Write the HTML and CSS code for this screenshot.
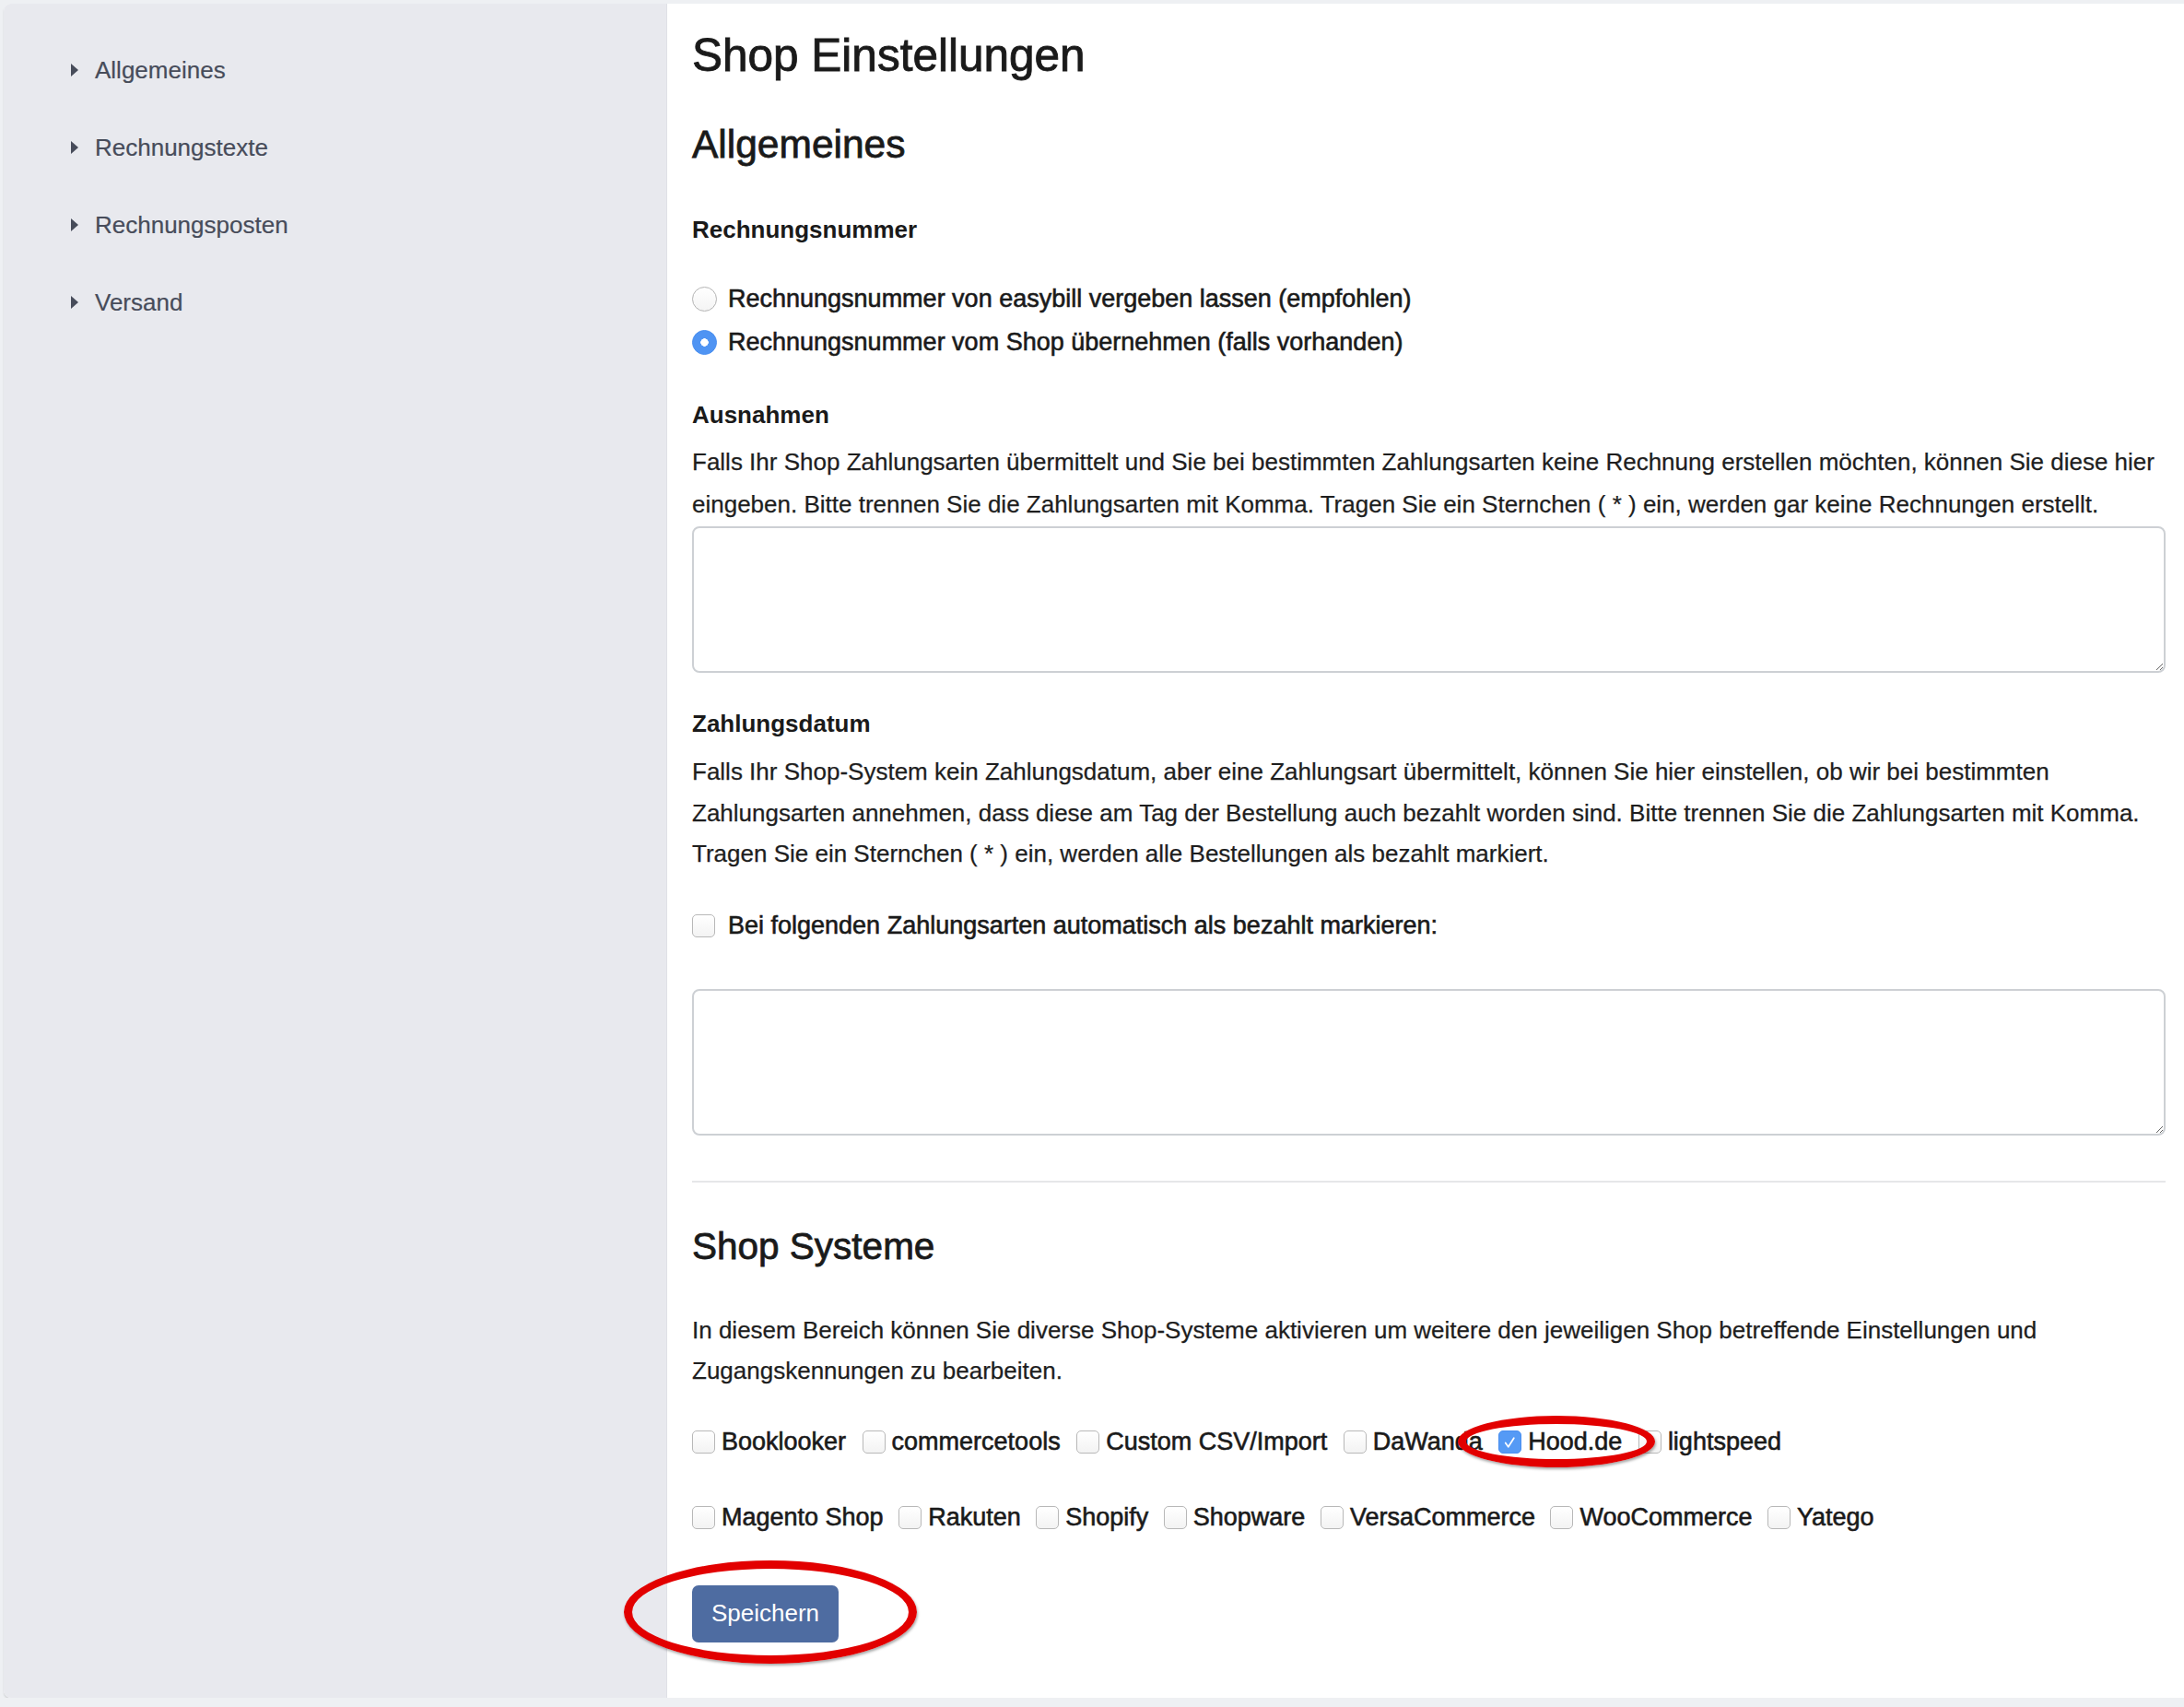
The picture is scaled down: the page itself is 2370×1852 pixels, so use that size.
FILE: index.html
```html
<!DOCTYPE html>
<html lang="de">
<head>
    <meta charset="UTF-8">
    <title>Shop Einstellungen</title>
    <link rel="stylesheet" href="styles.css">
</head>
<body>
    <div class="card">
        <aside class="sidebar">
            <ul class="nav">
                <li><span class="caret"></span>Allgemeines</li>
                <li><span class="caret"></span>Rechnungstexte</li>
                <li><span class="caret"></span>Rechnungsposten</li>
                <li><span class="caret"></span>Versand</li>
            </ul>
        </aside>

        <main class="content">
            <h1>Shop Einstellungen</h1>
            <h2>Allgemeines</h2>

            <div class="field-label number-label">Rechnungsnummer</div>
            <div class="radios">
                <label class="radio"><span class="dot"></span>Rechnungsnummer von easybill vergeben lassen (empfohlen)</label>
                <label class="radio"><span class="dot checked"></span>Rechnungsnummer vom Shop übernehmen (falls vorhanden)</label>
            </div>

            <div class="field-label section-label">Ausnahmen</div>
            <p class="help help-exceptions">Falls Ihr Shop Zahlungsarten übermittelt und Sie bei bestimmten Zahlungsarten keine Rechnung erstellen möchten, können Sie diese hier<br>eingeben. Bitte trennen Sie die Zahlungsarten mit Komma. Tragen Sie ein Sternchen ( * ) ein, werden gar keine Rechnungen erstellt.</p>
            <textarea class="input-area area-exceptions"></textarea>

            <div class="field-label section-label">Zahlungsdatum</div>
            <p class="help help-payment">Falls Ihr Shop-System kein Zahlungsdatum, aber eine Zahlungsart übermittelt, können Sie hier einstellen, ob wir bei bestimmten<br>Zahlungsarten annehmen, dass diese am Tag der Bestellung auch bezahlt worden sind. Bitte trennen Sie die Zahlungsarten mit Komma.<br>Tragen Sie ein Sternchen ( * ) ein, werden alle Bestellungen als bezahlt markiert.</p>

            <label class="check auto-paid"><span class="box"></span>Bei folgenden Zahlungsarten automatisch als bezahlt markieren:</label>
            <textarea class="input-area area-paid"></textarea>

            <hr class="divider">

            <h2 class="systems-title">Shop Systeme</h2>
            <p class="help help-systems">In diesem Bereich können Sie diverse Shop-Systeme aktivieren um weitere den jeweiligen Shop betreffende Einstellungen und<br>Zugangskennungen zu bearbeiten.</p>

            <div class="systems-row first-row">
                <label class="system"><span class="box"></span>Booklooker</label>
                <label class="system"><span class="box"></span>commercetools</label>
                <label class="system"><span class="box"></span>Custom CSV/Import</label>
                <label class="system"><span class="box"></span>DaWanda</label>
                <label class="system"><span class="box checked"><svg viewBox="0 0 24 24" width="24" height="24"><path d="M7 12.5l3.2 4.5 6.3-10" fill="none" stroke="#fff" stroke-width="1.8" stroke-linecap="round" stroke-linejoin="round"/></svg></span>Hood.de</label>
                <label class="system"><span class="box"></span>lightspeed</label>
            </div>
            <div class="systems-row second-row">
                <label class="system"><span class="box"></span>Magento Shop</label>
                <label class="system"><span class="box"></span>Rakuten</label>
                <label class="system"><span class="box"></span>Shopify</label>
                <label class="system"><span class="box"></span>Shopware</label>
                <label class="system"><span class="box"></span>VersaCommerce</label>
                <label class="system"><span class="box"></span>WooCommerce</label>
                <label class="system"><span class="box"></span>Yatego</label>
            </div>

            <button type="submit" class="btn-save">Speichern</button>
        </main>

        <!-- Markierungen aus dem Screenshot -->
        <div class="mark mark-hood"></div>
        <div class="mark mark-save"></div>
    </div>
</body>
</html>
```

FILE: styles.css
```css
body {
    margin: 0;
    background: #eef0f3;
    font-family: "Liberation Sans", Arial, sans-serif;
    color: #1e1e1e;
}
.card {
    position: relative;
    display: flex;
    margin: 4px 0 0 4px;
    height: 1838px;
    background: #fff;
    border-radius: 8px 0 0 8px;
    box-shadow: 0 2px 2px rgba(0, 0, 0, 0.13);
    overflow: hidden;
}

/* Seitenleiste */
.sidebar {
    width: 719px;
    flex-shrink: 0;
    background: #e8e9ee;
    border-right: 1px solid #dfe1e6;
}
.nav {
    list-style: none;
    margin: 0;
    padding: 30px 0 0 73px;
}
.nav li {
    display: flex;
    align-items: center;
    height: 84px;
    font-size: 26px;
    color: #474c5a;
    -webkit-text-stroke: 0.2px #474c5a;
}
.caret {
    width: 0;
    height: 0;
    border-top: 7px solid transparent;
    border-bottom: 7px solid transparent;
    border-left: 8px solid #474c5a;
    margin-right: 18px;
}

/* Inhalt */
.content {
    flex: 1;
    min-width: 0;
    padding: 26px 20px 0 27px;
}
h1 {
    margin: 0;
    font-size: 49.5px;
    line-height: 60px;
    font-weight: normal;
    color: #1a1a1a;
    -webkit-text-stroke: 0.9px #1a1a1a;
}
h2 {
    margin: 42px 0 0;
    font-size: 42.5px;
    line-height: 50px;
    font-weight: normal;
    color: #1a1a1a;
    -webkit-text-stroke: 0.8px #1a1a1a;
}
.field-label {
    font-size: 26px;
    line-height: 40px;
    font-weight: bold;
    color: #1a1a1a;
}
.number-label {
    margin-top: 47px;
}
.section-label {
    margin-top: 35px;
}
.radios {
    margin-top: 32px;
}
.radio {
    display: flex;
    align-items: center;
    height: 47px;
    font-size: 27px;
    color: #1a1a1a;
    -webkit-text-stroke: 0.6px #1a1a1a;
}
.dot {
    box-sizing: border-box;
    width: 27px;
    height: 27px;
    margin-right: 12px;
    border: 1.5px solid #b3b3b3;
    border-radius: 50%;
    background: linear-gradient(#fff, #f4f4f4);
}
.dot.checked {
    border-color: #4a8ff0;
    background: #4f94f3 radial-gradient(circle, #fff 0, #fff 4px, transparent 4.5px);
}
.help {
    margin: 8px 0 0;
    font-size: 26px;
    line-height: 46px;
    white-space: nowrap;
    color: #1e1e1e;
    -webkit-text-stroke: 0.25px #1e1e1e;
}
.help-payment {
    margin-top: 10px;
    line-height: 44.5px;
}
.help-systems {
    margin-top: 44.5px;
    line-height: 44px;
}
.input-area {
    display: block;
    box-sizing: border-box;
    width: 100%;
    height: 159px;
    margin-top: 1px;
    border: 2px solid #cdd0d4;
    border-radius: 8px;
    font-family: inherit;
    font-size: 26px;
}
.area-paid {
    margin-top: 48px;
}
.box {
    box-sizing: border-box;
    display: inline-flex;
    align-items: center;
    justify-content: center;
    width: 25px;
    height: 25px;
    flex-shrink: 0;
    border: 1.5px solid #b8b8b8;
    border-radius: 5px;
    background: linear-gradient(#fff, #f3f3f3);
}
.box.checked {
    border-color: #4a8ff0;
    background: #559af5;
}
.check {
    display: flex;
    align-items: center;
    height: 40px;
    margin-top: 36px;
    font-size: 27px;
    color: #1a1a1a;
    -webkit-text-stroke: 0.6px #1a1a1a;
}
.check .box {
    margin-right: 14px;
}
.divider {
    margin: 49px 0 0;
    border: none;
    border-top: 2px solid #e6e7e9;
}
.systems-title {
    margin-top: 44px;
    font-size: 40.5px;
}
.systems-row {
    display: flex;
    align-items: center;
    height: 40px;
}
.first-row {
    margin-top: 35.5px;
}
.second-row {
    margin-top: 42px;
}
.system {
    display: flex;
    align-items: center;
    margin-right: 16.5px;
    font-size: 27px;
    color: #1a1a1a;
    -webkit-text-stroke: 0.6px #1a1a1a;
}
.first-row .system {
    margin-right: 17.5px;
}
.system .box {
    margin-right: 7px;
}
.btn-save {
    display: block;
    height: 62px;
    margin-top: 53px;
    padding: 0 21px;
    border: none;
    border-radius: 7px;
    background: #4e6ca1;
    color: #fff;
    font-family: inherit;
    font-size: 26px;
    cursor: pointer;
}

/* rote Markierungen */
.mark {
    position: absolute;
    box-sizing: border-box;
    border: 9px solid #e20000;
    border-radius: 50%;
    box-shadow: 1px 2px 3px rgba(0, 0, 0, 0.35);
}
.mark-hood {
    left: 1578px;
    top: 1532px;
    width: 214px;
    height: 56px;
}
.mark-save {
    left: 673px;
    top: 1689px;
    width: 318px;
    height: 112px;
}
```
